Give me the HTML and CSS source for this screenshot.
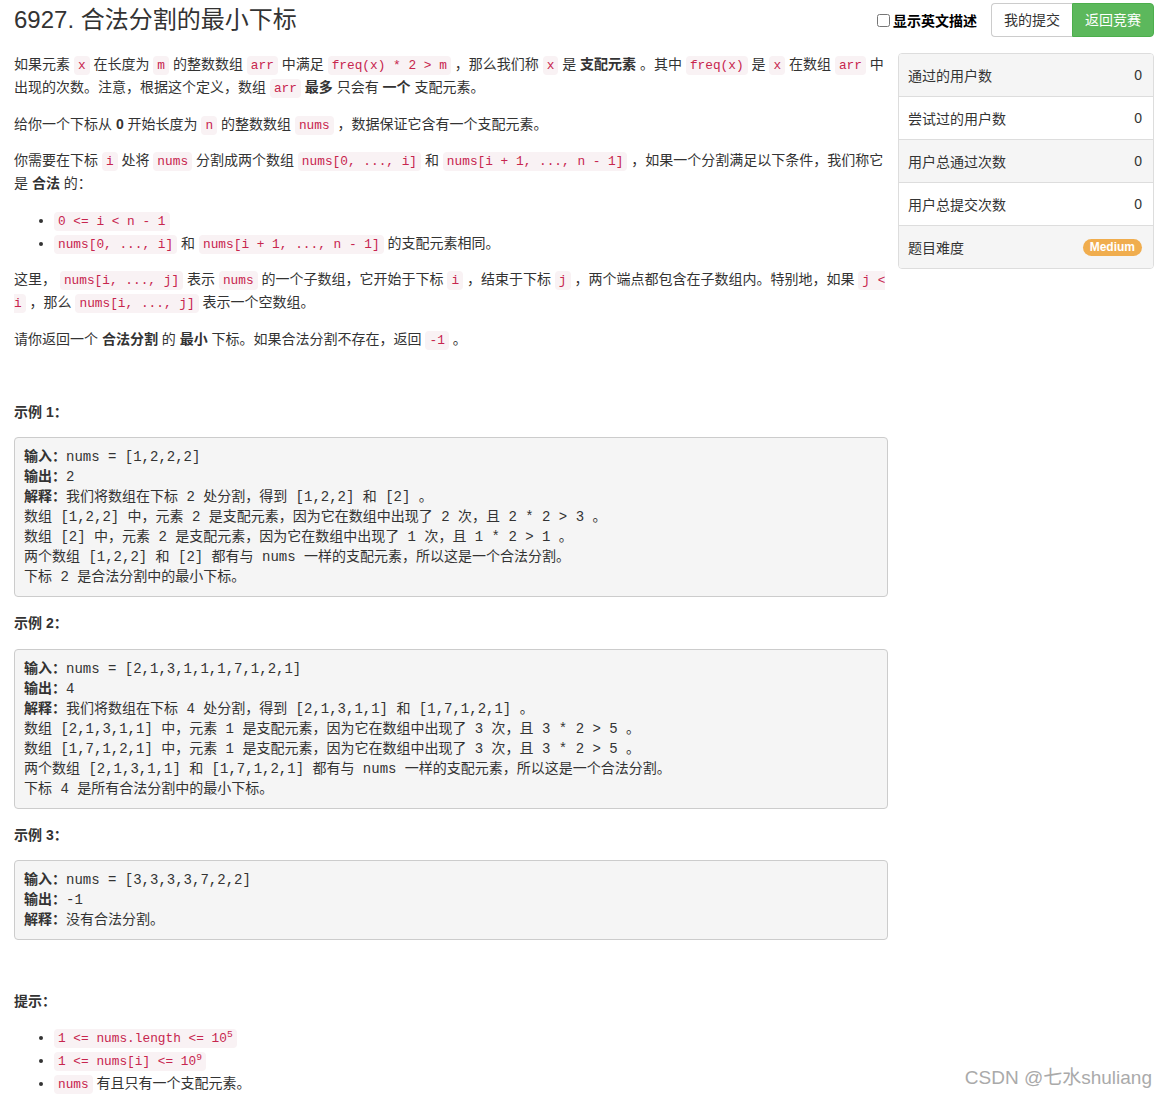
FILE: index.html
```html
<!DOCTYPE html>
<html lang="zh-CN">
<head>
<meta charset="utf-8">
<title>6927. 合法分割的最小下标</title>
<link rel="stylesheet" href="styles.css">
</head>
<body>
<div class="page">
  <header class="header">
    <h3 class="title">6927. 合法分割的最小下标</h3>
    <div class="controls">
      <label class="toggle"><input type="checkbox" class="check">显示英文描述</label>
      <div class="btn-group">
        <a class="btn btn-default">我的提交</a>
        <a class="btn btn-success">返回竞赛</a>
      </div>
    </div>
  </header>
  <div class="layout">
    <main class="content">
      <p>如果元素 <code>x</code> 在长度为 <code>m</code> 的整数数组 <code>arr</code> 中满足 <code>freq(x) * 2 &gt; m</code> ，那么我们称 <code>x</code> 是 <strong>支配元素</strong> 。其中 <code>freq(x)</code> 是 <code>x</code> 在数组 <code>arr</code> 中出现的次数。注意，根据这个定义，数组 <code>arr</code> <strong>最多</strong> 只会有 <strong>一个</strong> 支配元素。</p>
      <p>给你一个下标从 <strong>0</strong> 开始长度为 <code>n</code> 的整数数组 <code>nums</code> ，数据保证它含有一个支配元素。</p>
      <p>你需要在下标 <code>i</code> 处将 <code>nums</code> 分割成两个数组 <code>nums[0, ..., i]</code> 和 <code>nums[i + 1, ..., n - 1]</code> ，如果一个分割满足以下条件，我们称它是 <strong>合法</strong> 的：</p>
      <ul>
        <li><code>0 &lt;= i &lt; n - 1</code></li>
        <li><code>nums[0, ..., i]</code> 和 <code>nums[i + 1, ..., n - 1]</code> 的支配元素相同。</li>
      </ul>
      <p>这里， <code>nums[i, ..., j]</code> 表示 <code>nums</code> 的一个子数组，它开始于下标 <code>i</code> ，结束于下标 <code>j</code> ，两个端点都包含在子数组内。特别地，如果 <code>j &lt; i</code> ，那么 <code>nums[i, ..., j]</code> 表示一个空数组。</p>
      <p>请你返回一个 <strong>合法分割</strong> 的 <strong>最小</strong> 下标。如果合法分割不存在，返回 <code>-1</code> 。</p>
      <p>&nbsp;</p>
      <p><strong>示例 1：</strong></p>
<pre><strong>输入：</strong>nums = [1,2,2,2]
<strong>输出：</strong>2
<strong>解释：</strong>我们将数组在下标 2 处分割，得到 [1,2,2] 和 [2] 。
数组 [1,2,2] 中，元素 2 是支配元素，因为它在数组中出现了 2 次，且 2 * 2 &gt; 3 。
数组 [2] 中，元素 2 是支配元素，因为它在数组中出现了 1 次，且 1 * 2 &gt; 1 。
两个数组 [1,2,2] 和 [2] 都有与 nums 一样的支配元素，所以这是一个合法分割。
下标 2 是合法分割中的最小下标。</pre>
      <p><strong>示例 2：</strong></p>
<pre><strong>输入：</strong>nums = [2,1,3,1,1,1,7,1,2,1]
<strong>输出：</strong>4
<strong>解释：</strong>我们将数组在下标 4 处分割，得到 [2,1,3,1,1] 和 [1,7,1,2,1] 。
数组 [2,1,3,1,1] 中，元素 1 是支配元素，因为它在数组中出现了 3 次，且 3 * 2 &gt; 5 。
数组 [1,7,1,2,1] 中，元素 1 是支配元素，因为它在数组中出现了 3 次，且 3 * 2 &gt; 5 。
两个数组 [2,1,3,1,1] 和 [1,7,1,2,1] 都有与 nums 一样的支配元素，所以这是一个合法分割。
下标 4 是所有合法分割中的最小下标。</pre>
      <p><strong>示例 3：</strong></p>
<pre class="pre-last"><strong>输入：</strong>nums = [3,3,3,3,7,2,2]
<strong>输出：</strong>-1
<strong>解释：</strong>没有合法分割。</pre>
      <p>&nbsp;</p>
      <p><strong>提示：</strong></p>
      <ul>
        <li><code>1 &lt;= nums.length &lt;= 10<sup>5</sup></code></li>
        <li><code>1 &lt;= nums[i] &lt;= 10<sup>9</sup></code></li>
        <li><code>nums</code> 有且只有一个支配元素。</li>
      </ul>
    </main>
    <aside class="sidebar">
      <div class="stat"><span>通过的用户数</span><span>0</span></div>
      <div class="stat"><span>尝试过的用户数</span><span>0</span></div>
      <div class="stat"><span>用户总通过次数</span><span>0</span></div>
      <div class="stat"><span>用户总提交次数</span><span>0</span></div>
      <div class="stat"><span>题目难度</span><span class="badge">Medium</span></div>
    </aside>
  </div>
  <div class="watermark">CSDN @七水shuliang</div>
</div>
</body>
</html>
```

FILE: styles.css
```css
html, body {
  margin: 0;
  padding: 0;
  background: #fff;
}

body {
  font-family: "Liberation Sans", "Noto Sans CJK SC", sans-serif;
  font-size: 14px;
  color: #333;
}

.page {
  position: relative;
  box-sizing: border-box;
  padding: 3px 13px 0 14px;
}

.header {
  display: flex;
  justify-content: space-between;
  align-items: center;
  height: 34px;
  margin-bottom: 16px;
}

.title {
  margin: 0;
  font-size: 24px;
  font-weight: normal;
  line-height: 34px;
  color: #333;
}

.controls {
  display: flex;
  align-items: center;
  gap: 14px;
}

.toggle {
  display: flex;
  align-items: center;
  font-weight: bold;
  font-size: 14px;
  color: #000;
}

.check {
  margin: 0 3px 0 0;
  width: 13px;
  height: 13px;
}

.btn-group {
  display: flex;
}

.btn {
  display: block;
  box-sizing: border-box;
  height: 34px;
  padding: 6px 12px;
  line-height: 20px;
  font-size: 14px;
  border: 1px solid #ccc;
}

.btn-default {
  background: #fff;
  color: #333;
  border-radius: 4px 0 0 4px;
  border-right: none;
}

.btn-success {
  background: #5cb85c;
  border-color: #4cae4c;
  color: #fff;
  border-radius: 0 4px 4px 0;
}

.layout {
  display: flex;
  gap: 10px;
  align-items: flex-start;
}

.content {
  flex: 1;
  min-width: 0;
  line-height: 23px;
}

.content p {
  margin: 0 0 13.5px;
}

.content ul {
  margin: 0 0 13.5px;
  padding-left: 40px;
}

code {
  font-family: "Liberation Mono", monospace;
  font-size: 12.8px;
  line-height: 14px;
  padding: 2px 4px;
  color: #c7254e;
  background: #f9f2f4;
  border-radius: 4px;
}

sup {
  font-size: 75%;
  line-height: 0;
}

pre {
  margin: 0 0 15px;
  padding: 9px;
  font-family: "Liberation Mono", "Noto Sans CJK SC", monospace;
  font-size: 14px;
  line-height: 20px;
  color: #333;
  background: #f5f5f5;
  border: 1px solid #ccc;
  border-radius: 4px;
  white-space: pre-wrap;
}

.pre-last {
  margin-bottom: 13px;
}

.sidebar {
  flex: none;
  box-sizing: border-box;
  width: 256px;
  border: 1px solid #ddd;
  border-radius: 4px;
  overflow: hidden;
}

.stat {
  display: flex;
  justify-content: space-between;
  align-items: center;
  height: 42px;
  padding: 0 11px 0 9px;
  border-bottom: 1px solid #ddd;
  font-size: 14px;
  color: #333;
  background: #fff;
}

.stat:nth-child(odd) {
  background: #f5f5f5;
}

.stat:last-child {
  border-bottom: none;
}

.badge {
  display: inline-block;
  padding: 1px 7px;
  font-size: 12px;
  font-weight: bold;
  line-height: 15px;
  color: #fff;
  background: #f0ad4e;
  border-radius: 9px;
}

.watermark {
  position: absolute;
  right: 15px;
  top: 1066px;
  font-family: "Liberation Sans", "Noto Sans CJK SC", sans-serif;
  font-size: 19px;
  line-height: 24px;
  color: #aaa;
}
```
